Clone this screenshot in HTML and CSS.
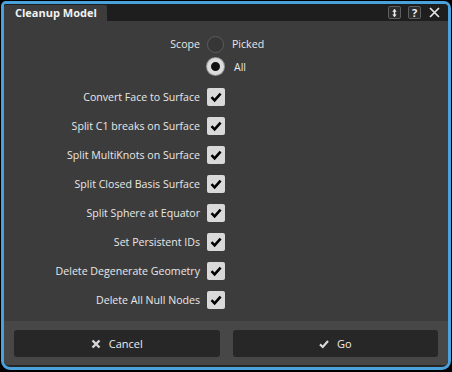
FILE: index.html
```html
<!DOCTYPE html>
<html>
<head>
<meta charset="utf-8">
<link rel="stylesheet" href="styles.css">
</head>
<body>
<div class="dialog">
  <div class="titlebar">
    <div class="tab">Cleanup Model</div>
    <div class="tools">
      <span class="tbox"><svg width="12" height="12" viewBox="0 0 12 12"><path d="M6 2v8" stroke="#eee" stroke-width="1.6"/><path d="M3.5 4.5L6 1.8 8.5 4.5z M3.5 7.5L6 10.2 8.5 7.5z" fill="#eee"/></svg></span>
      <span class="tbox q">?</span>
      <span class="close"><svg width="11" height="11" viewBox="0 0 11 11"><path d="M1 1L10 10M10 1L1 10" stroke="#e6e6e6" stroke-width="1.7"/></svg></span>
    </div>
  </div>
  <div class="content">
    <div class="row radio-row">
      <span class="label">Scope</span>
      <span class="ctl"><span class="radio"></span><span class="opt">Picked</span></span>
    </div>
    <div class="row radio-row">
      <span class="label"></span>
      <span class="ctl"><span class="radio on"></span><span class="opt all">All</span></span>
    </div>
    <div class="row cb-row"><span class="label">Convert Face to Surface</span><span class="cb"><svg width="18" height="18" viewBox="0 0 18 18"><path d="M4.5 9.2L7.6 12.3L13.6 5.6" fill="none" stroke="#000" stroke-width="2.6"/></svg></span></div>
    <div class="row cb-row"><span class="label">Split C1 breaks on Surface</span><span class="cb"><svg width="18" height="18" viewBox="0 0 18 18"><path d="M4.5 9.2L7.6 12.3L13.6 5.6" fill="none" stroke="#000" stroke-width="2.6"/></svg></span></div>
    <div class="row cb-row"><span class="label">Split MultiKnots on Surface</span><span class="cb"><svg width="18" height="18" viewBox="0 0 18 18"><path d="M4.5 9.2L7.6 12.3L13.6 5.6" fill="none" stroke="#000" stroke-width="2.6"/></svg></span></div>
    <div class="row cb-row"><span class="label">Split Closed Basis Surface</span><span class="cb"><svg width="18" height="18" viewBox="0 0 18 18"><path d="M4.5 9.2L7.6 12.3L13.6 5.6" fill="none" stroke="#000" stroke-width="2.6"/></svg></span></div>
    <div class="row cb-row"><span class="label">Split Sphere at Equator</span><span class="cb"><svg width="18" height="18" viewBox="0 0 18 18"><path d="M4.5 9.2L7.6 12.3L13.6 5.6" fill="none" stroke="#000" stroke-width="2.6"/></svg></span></div>
    <div class="row cb-row"><span class="label">Set Persistent IDs</span><span class="cb"><svg width="18" height="18" viewBox="0 0 18 18"><path d="M4.5 9.2L7.6 12.3L13.6 5.6" fill="none" stroke="#000" stroke-width="2.6"/></svg></span></div>
    <div class="row cb-row"><span class="label">Delete Degenerate Geometry</span><span class="cb"><svg width="18" height="18" viewBox="0 0 18 18"><path d="M4.5 9.2L7.6 12.3L13.6 5.6" fill="none" stroke="#000" stroke-width="2.6"/></svg></span></div>
    <div class="row cb-row"><span class="label">Delete All Null Nodes</span><span class="cb"><svg width="18" height="18" viewBox="0 0 18 18"><path d="M4.5 9.2L7.6 12.3L13.6 5.6" fill="none" stroke="#000" stroke-width="2.6"/></svg></span></div>
  </div>
  <div class="footer">
    <div class="btn"><svg width="10" height="10" viewBox="0 0 10 10"><path d="M1.5 1.5L8.5 8.5M8.5 1.5L1.5 8.5" stroke="#d8d8d8" stroke-width="2.4"/></svg><span>Cancel</span></div>
    <div class="btn"><svg width="10" height="10" viewBox="0 0 10 10"><path d="M1 5.4L3.8 8L9 2" fill="none" stroke="#d8d8d8" stroke-width="2.2"/></svg><span>Go</span></div>
  </div>
</div>
</body>
</html>
```
FILE: styles.css
```css
html, body {
  margin: 0;
  padding: 0;
  background: #000;
}
body {
  width: 452px;
  height: 372px;
  font-family: "Open Sans", "Noto Sans", sans-serif;
  font-size: 10.6px;
  color: #e8e8e8;
}
.dialog {
  margin: 1px 0 0 1px;
  width: 450px;
  height: 369px;
  box-sizing: border-box;
  border: 3px solid #4aa2dc;
  border-radius: 5px 7px 9px 9px;
  background: #262626;
  display: flex;
  flex-direction: column;
  overflow: hidden;
}
.titlebar {
  height: 17px;
  background: #1e1e1e;
  display: flex;
  align-items: flex-end;
  justify-content: space-between;
}
.tab {
  height: 16px;
  width: 103px;
  background: #3c3c3c;
  border-radius: 2px 2px 0 0;
  font-weight: 700;
  font-size: 11px;
  color: #f2f2f2;
  line-height: 16px;
  padding-left: 11px;
  box-sizing: border-box;
}
.tools {
  align-self: center;
  display: flex;
  align-items: center;
  gap: 7px;
  padding-right: 8px;
}
.tbox {
  width: 11px;
  height: 11px;
  border: 1px solid #5e5e5e;
  border-radius: 2px;
  background: #2c2c2c;
  display: flex;
  align-items: center;
  justify-content: center;
}
.tbox.q {
  font-size: 11px;
  font-weight: 700;
  color: #eee;
  line-height: 11px;
}
.close {
  display: flex;
  width: 11px;
  height: 11px;
  margin-left: 1px;
}
.content {
  flex: 1;
  background: #3c3c3c;
  padding: 12px 0 0 0;
  box-sizing: border-box;
}
.row {
  display: grid;
  grid-template-columns: 196px auto;
  column-gap: 7px;
  align-items: center;
}
.radio-row { height: 22px; }
.radio-row + .radio-row { height: 23px; margin-bottom: 4px; }
.cb-row { height: 29px; }
.label {
  text-align: right;
  white-space: nowrap;
}
.ctl {
  display: flex;
  align-items: center;
}
.radio {
  width: 17px;
  height: 17px;
  box-sizing: border-box;
  border-radius: 50%;
  border: 1px solid #5c5c5c;
  background: #363636;
}
.radio.on {
  border: 4px solid #dcdcdc;
  background: #111;
  box-shadow: 0 0 0 1px #9a9a9a;
}
.opt { margin-left: 8px; }
.opt.all { margin-left: 10px; }
.cb {
  width: 18px;
  height: 18px;
  background: #d9d9d9;
  border-radius: 2px;
  display: flex;
}
.footer {
  height: 44px;
  background: #474747;
  display: flex;
  gap: 13px;
  padding: 9px 10px 0 10px;
  box-sizing: border-box;
  margin-bottom: 2px;
}
.btn {
  flex: 1;
  height: 27px;
  background: #272727;
  border-radius: 3px;
  display: flex;
  align-items: center;
  justify-content: center;
  gap: 8px;
  font-size: 11px;
  color: #ececec;
}
```
